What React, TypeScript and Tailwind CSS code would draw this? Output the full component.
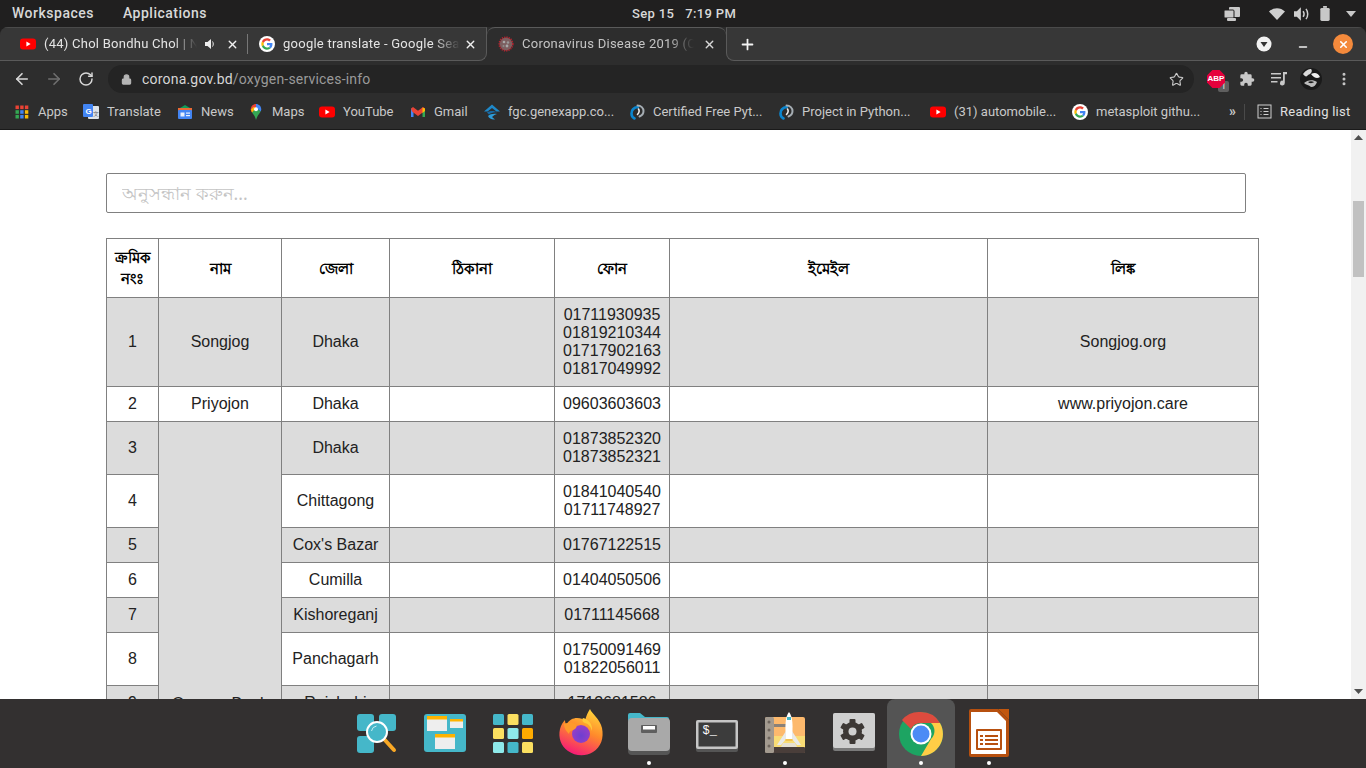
import React from 'react';
import { ArrowLeft, ArrowRight, RotateCw, Lock, Star, Plus, X, Minus, MoreVertical } from 'lucide-react';

const ui = "font-['Roboto',sans-serif]";

const GoogleG = ({ size = 16 }: { size?: number }) => (
    <svg width={size} height={size} viewBox="-3 -3 54 54" className="shrink-0">
        <circle cx="24" cy="24" r="27" fill="#fff" />
        <g transform="translate(4.800 4.800) scale(0.8)">
            <path fill="#EA4335" d="M24 9.5c3.54 0 6.71 1.22 9.21 3.6l6.85-6.85C35.9 2.38 30.47 0 24 0 14.62 0 6.51 5.38 2.56 13.22l7.98 6.19C12.43 13.72 17.74 9.5 24 9.5z" />
            <path fill="#4285F4" d="M46.98 24.55c0-1.57-.15-3.09-.38-4.55H24v9.02h12.94c-.58 2.96-2.26 5.48-4.78 7.18l7.73 6c4.51-4.18 7.09-10.36 7.09-17.65z" />
            <path fill="#FBBC05" d="M10.53 28.59c-.48-1.45-.76-2.99-.76-4.59s.27-3.14.76-4.59l-7.98-6.19C.92 16.46 0 20.12 0 24c0 3.88.92 7.54 2.56 10.78l7.97-6.19z" />
            <path fill="#34A853" d="M24 48c6.48 0 11.93-2.13 15.89-5.81l-7.73-6c-2.15 1.45-4.92 2.3-8.16 2.3-6.26 0-11.57-4.22-13.47-9.91l-7.98 6.19C6.51 42.62 14.62 48 24 48z" />
        </g>
    </svg>
);

const YouTubeIcon = () => (
    <svg width="16" height="16" viewBox="0 0 16 16" className="shrink-0">
        <rect x="0" y="2.5" width="16" height="11" rx="3" fill="#f00" />
        <path d="M6.4 5.6 10.6 8l-4.2 2.4z" fill="#fff" />
    </svg>
);

const CovidIcon = () => (
    <svg width="16" height="16" viewBox="0 0 16 16" className="shrink-0">
        <circle cx="8" cy="8" r="6.5" fill="#7c5f60" />
        <circle cx="8" cy="8" r="6.800" fill="none" stroke="#b3242f" strokeWidth="1.600" strokeDasharray="1.300 1" />
        <circle cx="6" cy="6" r="1.300" fill="#a8a8a8" />
        <circle cx="10" cy="6.500" r="1.200" fill="#9a9a9a" />
        <circle cx="9" cy="10" r="1.400" fill="#a8a8a8" />
        <circle cx="5.500" cy="10" r="1" fill="#8e8e8e" />
    </svg>
);

const AppsIcon = () => (
    <svg width="16" height="16" viewBox="0 0 16 16" className="shrink-0">
        {[
            ['#ea4335', '#ea4335', '#ea4335'],
            ['#34a853', '#4285f4', '#fbbc05'],
            ['#34a853', '#4285f4', '#fbbc05'],
        ].map((row, y) =>
            row.map((fill, x) => <rect key={`${x}-${y}`} x={1.5 + x * 4.7} y={1.5 + y * 4.7} width="3.4" height="3.6" fill={fill} />),
        )}
    </svg>
);

const TranslateIcon = () => (
    <svg width="16" height="16" viewBox="0 0 16 16" className="shrink-0">
        <rect x="5" y="2" width="11" height="13" rx="1" fill="#dfe3e8" />
        <rect x="0" y="0" width="10" height="13" rx="1" fill="#4285f4" />
        <text x="2.4" y="9.6" fontSize="8" fontWeight="700" fill="#fff" fontFamily="Liberation Sans">G</text>
        <text x="10.4" y="11.6" fontSize="6" fill="#5f6368" fontFamily="Liberation Sans">文</text>
    </svg>
);

const NewsIcon = () => (
    <svg width="16" height="16" viewBox="0 0 16 16" className="shrink-0">
        <path d="M3 4 8 1l5 3z" fill="#0f9d58" />
        <rect x="1" y="4" width="14" height="4" fill="#ea6a35" />
        <rect x="1" y="6" width="14" height="9" rx="1" fill="#4285f4" />
        <rect x="3.5" y="8.5" width="4" height="4" fill="#e8f0fe" />
        <rect x="9" y="8.5" width="4" height="1.2" fill="#e8f0fe" />
        <rect x="9" y="11" width="4" height="1.2" fill="#e8f0fe" />
    </svg>
);

const MapsIcon = () => (
    <svg width="16" height="16" viewBox="0 0 16 16" className="shrink-0">
        <path d="M8 0C5 0 2.800 2.300 2.800 5.200c0 1.300.5 2.400 1.200 3.400L8 4z" fill="#ea4335" />
        <path d="M8 0c3 0 5.200 2.300 5.200 5.200 0 .8-.2 1.500-.5 2.200L8 4z" fill="#4285f4" />
        <path d="M4 8.600C5.500 10.500 7 12 8 16c1-4 2.900-6 4.700-8.600L8 4z" fill="#34a853" />
        <path d="M4 8.600 8 4 5.600 3 3 5.500z" fill="#fbbc05" />
        <circle cx="8" cy="5.200" r="2" fill="#fff" />
    </svg>
);

const GmailIcon = () => (
    <svg width="16" height="16" viewBox="0 0 16 16" className="shrink-0">
        <path d="M1 4v9h2.500V7z" fill="#4285f4" />
        <path d="M15 4v9h-2.500V7z" fill="#34a853" />
        <path d="M1 4.500 3 3l5 3.800L13 3l2 1.500-1 3-6 4.500-6-4.500z" fill="#ea4335" />
        <path d="M12.500 3.500 15 4.500V7l-2.500 2z" fill="#fbbc05" />
    </svg>
);

const FgcIcon = () => (
    <svg width="16" height="16" viewBox="0 0 16 16" className="shrink-0">
        <path d="M8 0.500 16 7.500H12.500L8 4 3.500 7.500H0z" fill="#1e88c9" />
        <path d="M3 8.500C5 6.500 11 6.500 13 8.500 10 7.800 7 9 5 10.500z" fill="#1769a3" />
        <path d="M4 12c2-2 6-2.800 9-2-2 .5-4 2-5 3l3 2.500C8 16 5 14.500 4 12z" fill="#2d9bd8" />
    </svg>
);

const PythonSiteIcon = () => (
    <svg width="16" height="16" viewBox="0 0 16 16" className="shrink-0" fill="none">
        <path d="M9 3C5 3.500 2.500 6 2.500 9.500c0 2 1 4 3 5" stroke="#0b86cf" strokeWidth="2.600" strokeLinecap="round" />
        <path d="M8.500 1.500c3.500 0 6 2.500 6 5.500 0 2.500-1.500 4.500-4 5.500" stroke="#a5adb3" strokeWidth="2" strokeLinecap="round" />
        <path d="M9.500 5c1 1.500.8 3.500-1 5.500" stroke="#ececec" strokeWidth="1.600" strokeLinecap="round" />
    </svg>
);

const bookmarks = [
    { icon: <AppsIcon />, label: 'Apps', width: 'w-[29px]' },
    { icon: <TranslateIcon />, label: 'Translate', width: 'w-[54px]' },
    { icon: <NewsIcon />, label: 'News', width: 'w-[31px]' },
    { icon: <MapsIcon />, label: 'Maps', width: 'w-[31px]' },
    { icon: <YouTubeIcon />, label: 'YouTube', width: 'w-[51px]' },
    { icon: <GmailIcon />, label: 'Gmail', width: 'w-[34px]' },
    { icon: <FgcIcon />, label: 'fgc.genexapp.co...', width: 'w-[105px]' },
    { icon: <PythonSiteIcon />, label: 'Certified Free Pyt...', width: 'w-[109px]' },
    { icon: <PythonSiteIcon />, label: 'Project in Python...', width: 'w-[112px]' },
    { icon: <YouTubeIcon />, label: '(31) automobile...', width: 'w-[102px]' },
    { icon: <GoogleG />, label: 'metasploit githu...', width: 'w-[110px]' },
];

const TopBar = () => (
    <div className={`flex h-[27px] items-center bg-[#201f1f] text-[14px] font-medium text-[#d8d8d8] ${ui}`}>
        <div className="flex flex-1 gap-[29px] pl-[12px] tracking-[0.5px]">
            <span>Workspaces</span>
            <span>Applications</span>
        </div>
        <div className="flex gap-[11px] text-[13px] tracking-[0.35px]">
            <span>Sep 15</span>
            <span>7:19 PM</span>
        </div>
        <div className="flex flex-1 items-center justify-end pr-[10px]">
            <svg width="16" height="14" viewBox="0 0 16 14" className="mr-[29px]" fill="#c9c9c9">
                <rect x="5" y="0" width="11" height="10" rx="1" />
                <rect x="0" y="3" width="10" height="8" rx="1" stroke="#201f1f" strokeWidth="1" />
                <rect x="3" y="11" width="9" height="3" rx="1" />
            </svg>
            <svg width="16" height="12" viewBox="0 0 16 12" className="mr-[9px]" fill="#cfcfcf">
                <path d="M0 3.500C4.500-1 11.500-1 16 3.500L8 12z" />
            </svg>
            <svg width="16" height="16" viewBox="0 0 14 14" className="mr-[10px]" fill="none" stroke="#cfcfcf" strokeWidth="1.300">
                <path d="M0 4.500h2.500L6 1v12L2.500 9.500H0z" fill="#cfcfcf" stroke="none" />
                <path d="M8 4.500c1 1.500 1 3.500 0 5M10.500 2.500c2 2.500 2 6.500 0 9" />
            </svg>
            <svg width="10" height="15" viewBox="0 0 10 16" className="mr-[16px]" fill="#c8c8c8">
                <rect x="3" y="0" width="4" height="2" />
                <rect x="0" y="2" width="10" height="14" rx="1.500" />
            </svg>
            <svg width="10" height="6" viewBox="0 0 10 6" fill="#c8c8c8">
                <path d="M0 0h10L5 6z" />
            </svg>
        </div>
    </div>
);

const TabStrip = () => (
    <div className="bg-[#201f1f]">
        <div className={`flex h-[34px] overflow-hidden rounded-t-[8px] bg-[#2d2d2d] text-[13px] text-[#e4e4e4] ${ui}`}>
            <div className="flex w-[487px] items-center rounded-br-[8px] border-y border-r border-[#5a5a5a] border-t-[#4a4a4a] bg-[#373737]">
                <div className="flex w-[247px] items-center pl-[20px]">
                    <YouTubeIcon />
                    <span className="ml-[8px] w-[153px] overflow-hidden whitespace-nowrap tracking-[0.25px] [mask-image:linear-gradient(to_right,black_85%,transparent)]">(44) Chol Bondhu Chol | Nagar</span>
                    <svg width="12" height="12" viewBox="0 0 12 12" className="ml-[8px]" fill="#eee">
                        <path d="M0 4h2.500L6 1v10L2.500 8H0z" />
                        <path d="M7.500 3.500c1 1.500 1 3.500 0 5" fill="none" stroke="#eee" />
                    </svg>
                    <X size={13} strokeWidth={2.5} className="ml-[9px] text-[#f0f0f0]" />
                </div>
                <div className="h-[20px] w-px bg-[#777]" />
                <div className="flex items-center pl-[11px]">
                    <GoogleG />
                    <span className="ml-[8px] w-[177px] overflow-hidden whitespace-nowrap tracking-[0.25px] [mask-image:linear-gradient(to_right,black_85%,transparent)]">google translate - Google Search</span>
                    <X size={13} strokeWidth={2.5} className="ml-[4px] text-[#f0f0f0]" />
                </div>
            </div>
            <div className="flex w-[239px] items-center rounded-t-[8px] border-t border-[#5a5a5a] pb-[1px] pl-[11px] text-[#c4c4c4]">
                <CovidIcon />
                <span className="ml-[8px] w-[172px] overflow-hidden whitespace-nowrap tracking-[0.25px] [mask-image:linear-gradient(to_right,black_85%,transparent)]">Coronavirus Disease 2019 (COVID-19)</span>
                <X size={13} strokeWidth={2.5} className="ml-[9px] text-[#d8d8d8]" />
            </div>
            <div className="flex flex-1 items-center rounded-bl-[8px] border-y border-l border-[#5a5a5a] border-t-[#4a4a4a] bg-[#373737] pr-[13px]">
                <Plus size={17} strokeWidth={2.5} className="ml-[12px] text-[#f4f4f4]" />
                <div className="ml-auto flex items-center">
                    <svg width="16" height="16" viewBox="0 0 16 16" className="mr-[25px]">
                        <circle cx="8" cy="8" r="7.500" fill="#f2f2f2" />
                        <path d="M4.500 6h7L8 11z" fill="#333" />
                    </svg>
                    <Minus size={12} strokeWidth={3} className="mr-[24px] mt-[6px] text-[#f0f0f0]" />
                    <div className="flex h-[20px] w-[20px] items-center justify-center rounded-full bg-[#f48a3c]">
                        <X size={11} strokeWidth={3.5} className="text-white" />
                    </div>
                </div>
            </div>
        </div>
    </div>
);

const Toolbar = () => (
    <div className={`flex h-[34px] items-center bg-[#2d2d2d] pt-[2px] ${ui}`}>
        <ArrowLeft size={18} strokeWidth={2.2} className="ml-[13px] text-[#d8d8d8]" />
        <ArrowRight size={18} strokeWidth={2.2} className="ml-[14px] text-[#6f6f6f]" />
        <RotateCw size={16} strokeWidth={2.2} className="ml-[15px] text-[#d8d8d8]" />
        <div className="ml-[14px] flex h-[28px] w-[1086px] items-center rounded-full bg-[#242424] pl-[13px] pr-[10px] text-[14px] tracking-[0.2px]">
            <Lock size={11} strokeWidth={2.5} fill="#b5b5b5" className="text-[#b5b5b5]" />
            <span className="ml-[10px] text-[#d6d6d6]">corona.gov.bd</span>
            <span className="text-[#9a9a9a]">/oxygen-services-info</span>
            <Star size={15} strokeWidth={1.8} className="ml-auto text-[#c8c8c8]" />
        </div>
        <div className="ml-[13px] flex h-[18px] w-[18px] shrink-0 items-center justify-center bg-[#e6003c] [clip-path:polygon(30%_0,70%_0,100%_30%,100%_70%,70%_100%,30%_100%,0_70%,0_30%)]">
            <span className="font-['Liberation_Sans',sans-serif] text-[8px] font-bold text-white">ABP</span>
        </div>
        <span className="ml-[-7px] mt-[15px] flex h-[11px] w-[11px] items-center justify-center rounded-[2px] bg-[#5f5f5f] text-[9px] text-[#e0e0e0]">1</span>
        <svg width="16" height="16" viewBox="0 0 24 24" className="ml-[10px]" fill="#c8c8c8">
            <path d="M20.500 11H19V7a2 2 0 0 0-2-2h-4V3.500a2.500 2.500 0 0 0-5 0V5H4a2 2 0 0 0-2 2v3.800h1.500a2.700 2.700 0 0 1 0 5.400H2V20a2 2 0 0 0 2 2h3.800v-1.500a2.700 2.700 0 0 1 5.400 0V22H17a2 2 0 0 0 2-2v-4h1.500a2.500 2.500 0 0 0 0-5z" />
        </svg>
        <svg width="16" height="14" viewBox="0 0 16 14" className="ml-[16px]" fill="#c8c8c8">
            <rect x="0" y="1" width="10" height="1.500" />
            <rect x="0" y="5" width="10" height="1.500" />
            <rect x="0" y="9" width="6.500" height="1.500" />
            <path d="M12 0h4v2.200h-2.200V11a2.400 2.400 0 1 1-1.800-2.300z" />
        </svg>
        <svg width="22" height="22" viewBox="0 0 22 22" className="ml-[13px]">
            <circle cx="11" cy="11" r="11" fill="#1a1a1a" />
            <path d="M3 6c3-4 6-5 8-5 2 2 0 5-3 6-1 2-3 2-5-1z" fill="#d8d8d8" />
            <path d="M11 6c4-2 7-1 9 3-3 2-6 1-9-3z" fill="#efefef" />
            <path d="M4 15c3-3 9-4 13-1-1 3-3 5-6 5-2-2-5-2-7-4z" fill="#bdbdbd" />
            <path d="M8 14c2-1 4-1 6 0-1 1-4 2-6 0z" fill="#1a1a1a" />
        </svg>
        <MoreVertical size={16} strokeWidth={2.5} className="ml-[14px] text-[#c8c8c8]" />
    </div>
);

const BookmarksBar = () => (
    <div className={`flex h-[35px] items-center border-b border-[#1a1a1a] bg-[#2d2d2d] pb-[1px] pl-[14px] text-[13px] text-[#c9c9c9] ${ui}`}>
        <div className="flex w-[1210px] items-center gap-[16px]">
            {bookmarks.map((item) => (
                <div key={item.label} className="flex items-center gap-[8px]">
                    {item.icon}
                    <span className={`${item.width} whitespace-nowrap`}>{item.label}</span>
                </div>
            ))}
        </div>
        <span className="ml-[5px] text-[14px] font-bold text-[#c9c9c9]">»</span>
        <div className="ml-[8px] h-[16px] w-px bg-[#4a4a4a]" />
        <svg width="15" height="15" viewBox="0 0 15 15" className="ml-[12px]" fill="none" stroke="#d0d0d0">
            <rect x="1" y="1" width="13" height="13" />
            <path d="M3.500 4.500h1M6.500 4.500h5M3.500 7.500h1M6.500 7.500h5M3.500 10.500h1M6.500 10.500h5" />
        </svg>
        <span className="ml-[8px] whitespace-nowrap tracking-[0.25px] text-[#e0e0e0]">Reading list</span>
    </div>
);

type Row = { no: number; name?: string; district: string; phones: string[]; link?: string; gray: boolean };

const rows: Row[] = [
    { no: 1, name: 'Songjog', district: 'Dhaka', phones: ['01711930935', '01819210344', '01717902163', '01817049992'], link: 'Songjog.org', gray: true },
    { no: 2, name: 'Priyojon', district: 'Dhaka', phones: ['09603603603'], link: 'www.priyojon.care', gray: false },
    { no: 3, district: 'Dhaka', phones: ['01873852320', '01873852321'], gray: true },
    { no: 4, district: 'Chittagong', phones: ['01841040540', '01711748927'], gray: false },
    { no: 5, district: "Cox's Bazar", phones: ['01767122515'], gray: true },
    { no: 6, district: 'Cumilla', phones: ['01404050506'], gray: false },
    { no: 7, district: 'Kishoreganj', phones: ['01711145668'], gray: true },
    { no: 8, district: 'Panchagarh', phones: ['01750091469', '01822056011'], gray: false },
    { no: 9, district: 'Rajshahi', phones: ['1713681586'], gray: true },
];

const headers = ['ক্রমিক নংঃ', 'নাম', 'জেলা', 'ঠিকানা', 'ফোন', 'ইমেইল', 'লিঙ্ক'];

const cell = 'border border-[#808080] px-[8px] py-[8px] text-center align-middle';

const ServicesTable = () => (
    <table className="mt-[25px] w-[1152px] table-fixed border-collapse font-['Liberation_Sans',sans-serif] text-[16px] leading-[18px] text-[#222]">
        <colgroup>
            <col className="w-[52px]" />
            <col className="w-[123px]" />
            <col className="w-[108px]" />
            <col className="w-[165px]" />
            <col className="w-[115px]" />
            <col className="w-[318px]" />
            <col className="w-[271px]" />
        </colgroup>
        <thead>
            <tr className="h-[59px]">
                {headers.map((h) => (
                    <th key={h} className={`${cell} !px-[4px] !py-0 text-[15px] font-bold leading-[21px] text-black`}>{h}</th>
                ))}
            </tr>
        </thead>
        <tbody>
            {rows.map((row) => (
                <tr key={row.no} className={row.gray ? 'bg-[#dcdcdc]' : 'bg-white'}>
                    <td className={cell}>{row.no}</td>
                    {row.name && <td className={cell}>{row.name}</td>}
                    {row.no === 3 && <td rowSpan={8} className={`${cell} bg-[#dcdcdc]`}>Oxygen Bank</td>}
                    <td className={cell}>{row.district}</td>
                    <td className={cell} />
                    <td className={cell}>
                        {row.phones.map((p) => (
                            <div key={p}>{p}</div>
                        ))}
                    </td>
                    <td className={cell} />
                    <td className={cell}>{row.link}</td>
                </tr>
            ))}
            <tr className="h-[265px] bg-white">
                <td className={cell} />
                <td className={cell} />
                <td className={cell} />
                <td className={cell} />
                <td className={cell} />
                <td className={cell} />
            </tr>
        </tbody>
    </table>
);

const Scrollbar = () => (
    <div className="flex w-[15px] shrink-0 flex-col items-center justify-between bg-[#f1f1f1] py-[5px]">
        <svg width="9" height="5" viewBox="0 0 9 5" fill="#505050"><path d="M4.500 0 9 5H0z" /></svg>
        <svg width="9" height="5" viewBox="0 0 9 5" fill="#505050"><path d="M4.500 5 9 0H0z" /></svg>
    </div>
);

const Dock = () => (
    <div className="flex h-[69px] justify-center bg-[#333030]">
        <DockItem>
            <svg width="48" height="48" viewBox="0 0 48 48">
                <rect x="4" y="5" width="17" height="17" rx="3" fill="#45b7c9" />
                <rect x="26" y="5" width="17" height="17" rx="3" fill="#45b7c9" />
                <rect x="4" y="27" width="17" height="17" rx="3" fill="#45b7c9" />
                <path d="M31 30 41 41" stroke="#f9a825" strokeWidth="4" strokeLinecap="round" />
                <circle cx="24" cy="23" r="10" fill="#45b7c9" stroke="#fff" strokeWidth="2" />
                <path d="M18.500 22a6 6 0 0 1 5-5" fill="none" stroke="#c4eef3" strokeWidth="1" />
            </svg>
        </DockItem>
        <DockItem>
            <svg width="48" height="48" viewBox="0 0 48 48">
                <rect x="3" y="5" width="42" height="38" rx="3" fill="#45b7c9" />
                <rect x="6" y="7" width="20" height="15" fill="#eeeeee" />
                <rect x="6" y="7" width="20" height="3.500" fill="#ffb300" />
                <rect x="29" y="10" width="13" height="9" fill="#eeeeee" />
                <rect x="29" y="10" width="13" height="2.500" fill="#ffb300" />
                <rect x="14" y="25" width="20" height="15" fill="#eeeeee" />
                <rect x="14" y="25" width="20" height="3.500" fill="#ffb300" />
            </svg>
        </DockItem>
        <DockItem>
            <svg width="48" height="48" viewBox="0 0 48 48">
                {[
                    ['#45b7c9', '#fbdf60', '#45b7c9'],
                    ['#fbdf60', '#8ee9ea', '#ffab00'],
                    ['#8ee9ea', '#45b7c9', '#fbdf60'],
                ].map((row, y) =>
                    row.map((fill, x) => <rect key={`${x}-${y}`} x={4 + x * 14.5} y={5 + y * 14} width="11" height="11" rx="1.500" fill={fill} />),
                )}
            </svg>
        </DockItem>
        <DockItem>
            <svg width="48" height="48" viewBox="0 0 48 48">
                <defs>
                    <linearGradient id="fxOuter" x1="0.700" y1="0" x2="0.300" y2="1">
                        <stop offset="0" stopColor="#ffd43a" />
                        <stop offset="0.45" stopColor="#ff8a2b" />
                        <stop offset="1" stopColor="#f5157a" />
                    </linearGradient>
                    <radialGradient id="fxGlobe" cx="0.500" cy="0.600" r="0.600">
                        <stop offset="0" stopColor="#6d3fd1" />
                        <stop offset="1" stopColor="#9a3fc4" />
                    </radialGradient>
                </defs>
                <path d="M33 0c2 5 10 10 12 19 2 10-1 19-9 24-8 5-18 4-25-1C4 37 1 29 3 20c1-4 3-7 5-9 0 2 .5 3.500 1.500 4.500C12 11 16 9 20 9c4 0 6 1 8 3 1-5 3-9 5-12z" fill="url(#fxOuter)" />
                <circle cx="24" cy="25" r="9" fill="url(#fxGlobe)" />
                <path d="M7 15c4-2 8-2 11 0 3 2 1 5-2 6-3 1-4 2-4 4-3-3-5-6-5-10z" fill="#ff9a2b" />
                <path d="M26 9c5 1 10 6 9 13-1-4-3-7-7-8-3-1-3-4-2-5z" fill="#ffc93a" />
            </svg>
        </DockItem>
        <DockItem dot>
            <svg width="48" height="48" viewBox="0 0 48 48">
                <path d="M3 6a2 2 0 0 1 2-2h10l5 4h22a2 2 0 0 1 2 2v6H3z" fill="#45b7c9" />
                <rect x="3" y="10" width="42" height="36" rx="4" fill="#555555" />
                <rect x="3" y="9" width="42" height="33" rx="4" fill="#a9a9a9" />
                <rect x="16" y="16" width="16" height="8" rx="1" fill="#5f5f5f" />
                <rect x="18" y="17" width="12" height="3.500" fill="#ffffff" />
            </svg>
        </DockItem>
        <DockItem>
            <svg width="48" height="48" viewBox="0 0 48 48">
                <rect x="3" y="11" width="42" height="32" rx="2" fill="#555555" />
                <rect x="3" y="11" width="42" height="29" rx="2" fill="#c6c6c6" />
                <rect x="5.500" y="13.500" width="37" height="24" fill="#3c3c3c" />
                <text x="9.500" y="25" fontSize="12" fill="#fff" fontFamily="Liberation Mono">$_</text>
            </svg>
        </DockItem>
        <DockItem dot>
            <svg width="48" height="48" viewBox="0 0 48 48">
                <rect x="4" y="8" width="40" height="36" rx="2" fill="#fdb96d" />
                <path d="M4 27h40v12H4z" fill="#f9dc75" />
                <rect x="4" y="38" width="40" height="6" rx="1" fill="#4a3e3a" />
                <rect x="4" y="8" width="9" height="36" rx="1.500" fill="#a39a8f" />
                <rect x="13" y="15" width="16" height="3" fill="#8b8178" />
                <circle cx="8" cy="13" r="1.500" fill="#6f665e" />
                <circle cx="8" cy="21" r="1.500" fill="#6f665e" />
                <circle cx="8" cy="29" r="1.500" fill="#6f665e" />
                <circle cx="8" cy="37" r="1.500" fill="#6f665e" />
                <path d="M28 3c4 5 4 14 3 27h-6C24 17 24 8 28 3z" fill="#ffffff" />
                <rect x="26" y="8" width="4" height="3" fill="#45b7c9" />
                <path d="M25 22 16 36h4l5-6zM31 22 40 36h-4l-5-6z" fill="#e9e9e9" />
                <rect x="24.500" y="30" width="7" height="2" fill="#f2c14e" />
                <path d="M22 34h12l2 4H20z" fill="#e6e0d2" />
            </svg>
        </DockItem>
        <DockItem>
            <svg width="48" height="48" viewBox="0 0 48 48">
                <rect x="4" y="4" width="42" height="38" rx="2" fill="#7a7a7a" />
                <rect x="4" y="4" width="42" height="35" rx="2" fill="#cfcfcf" />
                <g transform="translate(23.500 22.500)" fill="#3d3835">
                    {[0, 60, 120].map((deg) => (
                        <rect key={deg} x="-3" y="-12.500" width="6" height="25" rx="1" transform={`rotate(${deg})`} />
                    ))}
                    <circle r="9.500" />
                </g>
                <circle cx="23.500" cy="22.500" r="4" fill="#cfcfcf" />
            </svg>
        </DockItem>
        <DockItem dot active>
            <svg width="48" height="48" viewBox="0 0 48 48">
                <circle cx="24" cy="25" r="22" fill="#1da462" />
                <path d="M24 3a22 22 0 0 1 19 11H24a11 11 0 0 0-10 6L5 11A22 22 0 0 1 24 3z" fill="#dd4b3e" />
                <path d="M43 14a22 22 0 0 1-19 33l10-17a11 11 0 0 0 0-16z" fill="#ffcd46" />
                <circle cx="24" cy="25" r="10.500" fill="#fff" />
                <circle cx="24" cy="25" r="8.500" fill="#4c8bf5" />
            </svg>
        </DockItem>
        <DockItem dot>
            <svg width="48" height="48" viewBox="0 0 48 48">
                <path d="M4 2a2 2 0 0 1 2-2h27l11 11v35a2 2 0 0 1-2 2H6a2 2 0 0 1-2-2z" fill="#b7500f" />
                <path d="M6 3h26l9 9v33H6z" fill="#ffffff" />
                <path d="M33 0h11v11z" fill="#c2570e" />
                <rect x="11" y="20" width="26" height="21" rx="1" fill="#b7500f" />
                <rect x="13" y="22" width="22" height="17" fill="#fff" />
                <path d="M15 27h3M20 27h13M15 31h3M20 31h13M15 35h3M20 35h13" stroke="#b7500f" strokeWidth="2" />
            </svg>
        </DockItem>
    </div>
);

function DockItem({ children, dot, active }: { children: React.ReactNode; dot?: boolean; active?: boolean }) {
    return (
        <div className={`relative flex h-[69px] w-[68px] justify-center pt-[10px] ${active ? 'rounded-t-[8px] bg-[#545454]' : ''}`}>
            {children}
            {dot && <span className="absolute bottom-[3px] left-[32px] h-[4px] w-[4px] rounded-full bg-white" />}
        </div>
    );
}

export default function App() {
    return (
        <div className="flex h-screen w-full flex-col overflow-hidden bg-white">
            <TopBar />
            <TabStrip />
            <Toolbar />
            <BookmarksBar />
            <div className="flex min-h-0 flex-1">
                <main className="min-w-0 flex-1 overflow-hidden pl-[106px] pt-[43px]">
                    <input
                        readOnly
                        placeholder="অনুসন্ধান করুন..."
                        className="block h-[40px] w-[1140px] rounded-[2px] border border-[#808080] px-[15px] text-[17.5px] outline-none placeholder:text-[#c4c4c4]"
                    />
                    <ServicesTable />
                </main>
                <div className="relative flex">
                    <Scrollbar />
                    <div className="absolute left-[2px] top-[71px] h-[76px] w-[11px] bg-[#c1c1c1]" />
                </div>
            </div>
            <Dock />
        </div>
    );
}
